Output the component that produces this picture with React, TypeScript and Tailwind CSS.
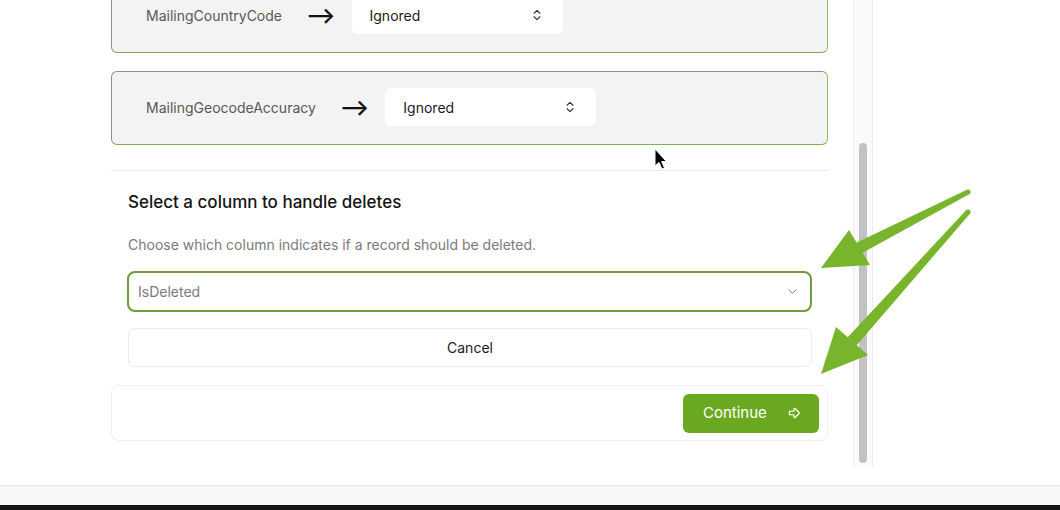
import React from "react";
import { ChevronsUpDown, ChevronDown, ArrowBigRight } from "lucide-react";

const font = { fontFamily: "Inter, 'Noto Sans', sans-serif" };

const MappingRow = ({ label, first }: { label: string; first?: boolean }) => (
  <div
    className={`flex h-[74px] items-center rounded-md border border-[#8f8f8f] border-r-[#8bbb5c] border-b-[#7fb04c] bg-[#f3f3f4] pl-[34px] pb-[2px] ${
      first ? "-mt-[21px]" : ""
    }`}
  >
    <span className="text-[14px] text-[#585858]">{label}</span>
    <span className="ml-[24px] mr-[16px] text-[22px] font-semibold leading-none text-[#111]">⟶</span>
    <div className="flex h-[38px] w-[211px] items-center justify-between rounded-md bg-white pl-[18px] pr-[19px]">
      <span className="text-[14px] text-[#1a1a1a]">Ignored</span>
      <ChevronsUpDown className="h-[14px] w-[14px] text-[#333]" strokeWidth={2} />
    </div>
  </div>
);

export default function App() {
  return (
    <div className="relative flex h-[510px] w-[1060px] flex-col overflow-hidden bg-white" style={font}>
      <div className="flex h-[485px]">
        {/* scrolled panel */}
        <div className="w-[853px] overflow-hidden pl-[111px]">
          <div className="flex w-[717px] flex-col">
            <MappingRow label="MailingCountryCode" first />
            <div className="mt-[18px]">
              <MappingRow label="MailingGeocodeAccuracy" />
            </div>
            <div className="mt-[25px] border-t border-[#ebebeb]" />

            <div className="flex flex-col px-[16px] pt-[20px]">
              <h3 className="pl-[1px] text-[17px] font-medium leading-[22px] text-[#141414]">
                Select a column to handle deletes
              </h3>
              <p className="mt-[23px] pl-[1px] text-[14px] leading-[18px] text-[#7a7a7a]">
                Choose which column indicates if a record should be deleted.
              </p>
              <div className="mt-[17px] flex h-[41px] items-center justify-between rounded-lg border-2 border-[#6c9c3c] bg-white pl-[9px] pr-[10px]">
                <span className="text-[14px] text-[#7a7a7a]">IsDeleted</span>
                <ChevronDown className="h-[15px] w-[15px] text-[#777]" strokeWidth={1.5} />
              </div>
              <button className="mt-[16px] ml-[1px] flex h-[39px] items-center justify-center rounded-md border border-[#ececec] bg-white text-[14px] text-[#1a1a1a]">
                Cancel
              </button>
            </div>

            <div className="mt-[18px] flex h-[56px] items-center justify-end rounded-lg border border-[#efefef] bg-white pr-[8px]">
              <button className="flex h-[39px] w-[136px] items-center rounded-md bg-[#6aa91f] pl-[20px] text-[15px] text-white">
                Continue
                <ArrowBigRight className="ml-[20px] h-[14px] w-[14px]" strokeWidth={2} />
              </button>
            </div>
          </div>
        </div>

        {/* scrollbar */}
        <div className="flex h-[467px] w-[20px] flex-col border-x border-[#ececec] bg-[#fafafa] px-[5px] pt-[143px] pb-[4px]">
          <div className="flex-1 rounded-full bg-[#c2c2c2]" />
        </div>
        <div className="flex-1" />
      </div>

      <div className="h-[20px] border-t border-[#e6e6e6] bg-[#f7f7f7]" />
      <div className="h-[5px] bg-[#151515]" />

      {/* annotation arrows */}
      <svg className="pointer-events-none absolute inset-0" width="1060" height="510">
        <g fill="#79b42d">
          <polygon points="966.9,189.8 969.1,194.2 861.7,253.3 856.3,242.7" />
          <polygon points="849,230 821,268 870,265" />
          <circle cx="968" cy="192" r="2.5" />
          <polygon points="966.1,210.3 969.9,213.7 856.5,345.5 847.5,337.5" />
          <polygon points="836,327 821,374 868,355" />
          <circle cx="968" cy="212" r="2.5" />
        </g>
      </svg>

      {/* mouse cursor */}
      <svg className="pointer-events-none absolute left-[654px] top-[148px]" width="14" height="24" viewBox="0 0 14 24">
        <path d="M1 1 L1 18 L5 14.5 L8 21 L10.5 20 L7.6 13.6 L12.5 13.6 Z" fill="#000" stroke="#fff" strokeWidth="1" strokeLinejoin="round" />
      </svg>
    </div>
  );
}
